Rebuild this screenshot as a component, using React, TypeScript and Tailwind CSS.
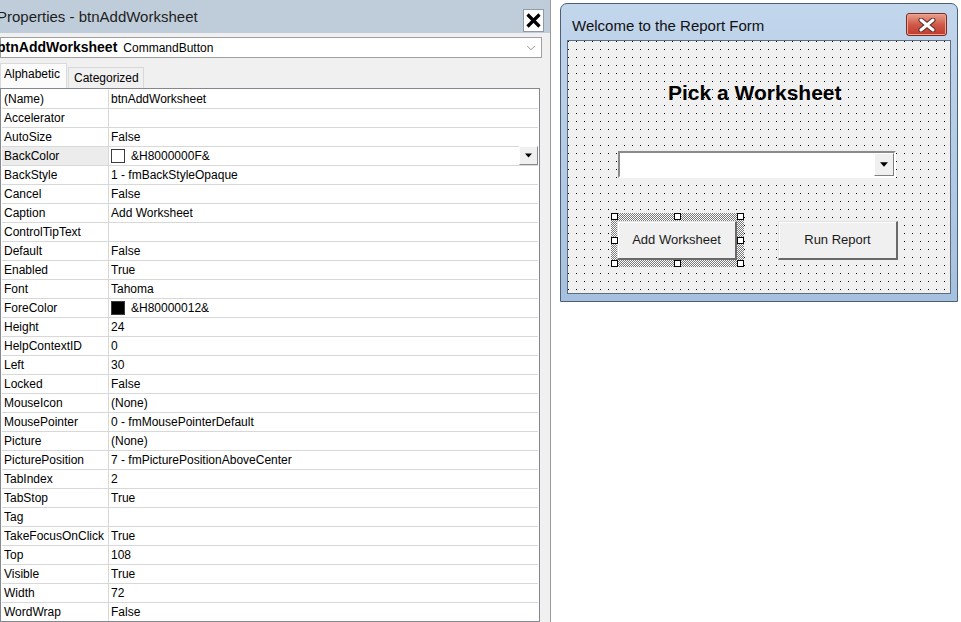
import { ChevronDown } from "lucide-react";

type Prop = { name: string; value: string; swatch?: string; picker?: boolean };

const PROPS: Prop[] = [
  { name: "(Name)", value: "btnAddWorksheet" },
  { name: "Accelerator", value: "" },
  { name: "AutoSize", value: "False" },
  { name: "BackColor", value: "&H8000000F&", swatch: "bg-white", picker: true },
  { name: "BackStyle", value: "1 - fmBackStyleOpaque" },
  { name: "Cancel", value: "False" },
  { name: "Caption", value: "Add Worksheet" },
  { name: "ControlTipText", value: "" },
  { name: "Default", value: "False" },
  { name: "Enabled", value: "True" },
  { name: "Font", value: "Tahoma" },
  { name: "ForeColor", value: "&H80000012&", swatch: "bg-black" },
  { name: "Height", value: "24" },
  { name: "HelpContextID", value: "0" },
  { name: "Left", value: "30" },
  { name: "Locked", value: "False" },
  { name: "MouseIcon", value: "(None)" },
  { name: "MousePointer", value: "0 - fmMousePointerDefault" },
  { name: "Picture", value: "(None)" },
  { name: "PicturePosition", value: "7 - fmPicturePositionAboveCenter" },
  { name: "TabIndex", value: "2" },
  { name: "TabStop", value: "True" },
  { name: "Tag", value: "" },
  { name: "TakeFocusOnClick", value: "True" },
  { name: "Top", value: "108" },
  { name: "Visible", value: "True" },
  { name: "Width", value: "72" },
  { name: "WordWrap", value: "False" },
];

const DownTriangle = ({ w = 7 }: { w?: number }) => (
  <svg width={w} height={Math.ceil(w / 2) + 1} viewBox="0 0 7 4">
    <path d="M0 0h7L3.5 4z" fill="#000" />
  </svg>
);

const PropRow = ({ p }: { p: Prop }) => (
  <div className="flex h-[19px] border-b border-[#d8d8d8]">
    <div
      className={`w-[107px] shrink-0 border-r border-[#d8d8d8] pl-[2px] leading-[19px] ${
        p.picker ? "bg-[#ececec]" : ""
      }`}
    >
      {p.name}
    </div>
    <div className="relative flex flex-1 items-center pl-[2px]">
      {p.swatch && (
        <span className={`mr-[6px] inline-block h-[14px] w-[14px] border border-[#3c3c3c] ${p.swatch}`} />
      )}
      <span className="leading-[19px]">{p.value}</span>
      {p.picker && (
        <div className="absolute top-[-1px] right-0 flex h-[19px] w-[19px] items-center justify-center border border-t-white border-l-white border-r-[#8a8a8a] border-b-[#8a8a8a] bg-[#f0f0f0]">
          <DownTriangle w={7} />
        </div>
      )}
    </div>
  </div>
);

const PropertiesPane = () => (
  <div className="flex w-[551px] shrink-0 flex-col border-r border-[#9a9a9a] bg-[#f0f0f0]">
    <div className="flex h-[33px] items-end justify-between bg-[#bfcddb] pb-px">
      <span className="-ml-[3px] self-center text-[15px] leading-none text-[#1e1e1e]">
        Properties - btnAddWorksheet
      </span>
      <div className="mr-[6px] flex h-[23px] w-[21px] items-center justify-center border border-[#8d9aa8] bg-white">
        <svg width="15" height="15" viewBox="0 0 15 15">
          <path d="M1.5 1.5l12 12M13.5 1.5l-12 12" stroke="#000" strokeWidth="3.2" />
        </svg>
      </div>
    </div>

    <div className="mt-[4px] flex h-[21px] w-[542px] items-center border border-[#a0a0a0] bg-white">
      <span className="-ml-[4px] text-[14px] font-bold">btnAddWorksheet</span>
      <span className="ml-[6px]">CommandButton</span>
      <ChevronDown className="mr-[3px] ml-auto" size={14} strokeWidth={1.2} color="#6a6a6a" />
    </div>

    <div className="mt-[5px] flex h-[25px] items-end">
      <div className="h-[25px] w-[67px] border border-b-0 border-[#d9d9d9] bg-[#fbfbfb] pl-[3px] leading-[21px]">
        Alphabetic
      </div>
      <div className="ml-px h-[21px] w-[76px] border border-b-0 border-[#d9d9d9] pl-[5px] leading-[20px]">
        Categorized
      </div>
    </div>

    <div className="w-[540px] flex-1 overflow-hidden border border-[#828790] bg-white p-px">
      {PROPS.map((p) => (
        <PropRow key={p.name} p={p} />
      ))}
    </div>
  </div>
);

const CloseButton = () => (
  <div className="mt-[9px] mr-[4px] ml-auto flex h-[23px] w-[41px] items-center justify-center rounded-[3px] border border-[#7b2c20] bg-gradient-to-b from-[#e7a08f] via-[#d0594a] to-[#c0392b] shadow-[inset_0_0_0_1px_#eca594]">
    <svg width="18" height="14" viewBox="0 0 18 14">
      <path d="M3 2l12 10M15 2L3 12" stroke="#5a2a24" strokeWidth="5" strokeLinecap="round" />
      <path d="M3 2l12 10M15 2L3 12" stroke="#fff" strokeWidth="3" strokeLinecap="round" />
    </svg>
  </div>
);

const FormButton = ({ label }: { label: string }) => (
  <div className="flex h-[39px] w-[120px] items-center justify-center border-t border-l border-[#e3e3e3] border-r-2 border-b-2 border-r-[#696969] border-b-[#696969] bg-[#f0f0f0] text-[13px] text-[#1a1a1a] shadow-[inset_1px_1px_0_#fff]">
    {label}
  </div>
);

const Handle = ({ pos }: { pos: string }) => (
  <span className={`absolute h-[7px] w-[7px] border border-black bg-white ${pos}`} />
);

const UserFormWindow = () => (
  <div className="flex h-[299px] w-[398px] flex-col rounded-t-[7px] border border-[#4d5f75] bg-gradient-to-b from-[#c2d6ec] to-[#a6c1df] px-[6px] pb-[7px]">
    <div className="flex h-[36px] shrink-0 items-start">
      <span className="mt-[14px] ml-[5px] text-[15px] leading-none text-[#111]">
        Welcome to the Report Form
      </span>
      <CloseButton />
    </div>

    <div className="flex flex-1 flex-col border border-[#5d6d80] bg-[#f0f0f0] bg-[image:conic-gradient(at_1px_1px,transparent_75%,#000_0)] bg-size-[8px_8px]">
      <div className="mt-[40px] pl-[100px] text-[21px] leading-[24px] font-bold">Pick a Worksheet</div>

      <div className="mt-[46px] ml-[50px] flex h-[27px] w-[278px] border-2 border-t-[#8a8a8a] border-l-[#8a8a8a] border-r-white border-b-white bg-white">
        <div className="ml-auto flex h-full w-[20px] items-center justify-center border border-t-white border-l-white border-r-[#808080] border-b-[#808080] bg-[#f0f0f0]">
          <DownTriangle w={8} />
        </div>
      </div>

      <div className="mt-[35px] flex items-start">
        <div className="relative ml-[43px] h-[54px] w-[133px] bg-[image:repeating-conic-gradient(#7a7a7a_0_25%,#ffffff_0_50%)] bg-size-[2px_2px] pt-[8px] pl-[6px]">
          <FormButton label="Add Worksheet" />
          <Handle pos="top-0 left-0" />
          <Handle pos="top-0 left-[63px]" />
          <Handle pos="top-0 right-0" />
          <Handle pos="top-[24px] left-0" />
          <Handle pos="top-[24px] right-0" />
          <Handle pos="bottom-0 left-0" />
          <Handle pos="bottom-0 left-[63px]" />
          <Handle pos="bottom-0 right-0" />
        </div>
        <div className="mt-[8px] ml-[34px]">
          <FormButton label="Run Report" />
        </div>
      </div>
    </div>
  </div>
);

export default function App() {
  return (
    <div className="flex h-[622px] w-[961px] overflow-hidden bg-white font-['Liberation_Sans',Arial,sans-serif] text-[12px] text-black">
      <PropertiesPane />
      <div className="flex-1 pt-[3px] pl-[9px]">
        <UserFormWindow />
      </div>
    </div>
  );
}
